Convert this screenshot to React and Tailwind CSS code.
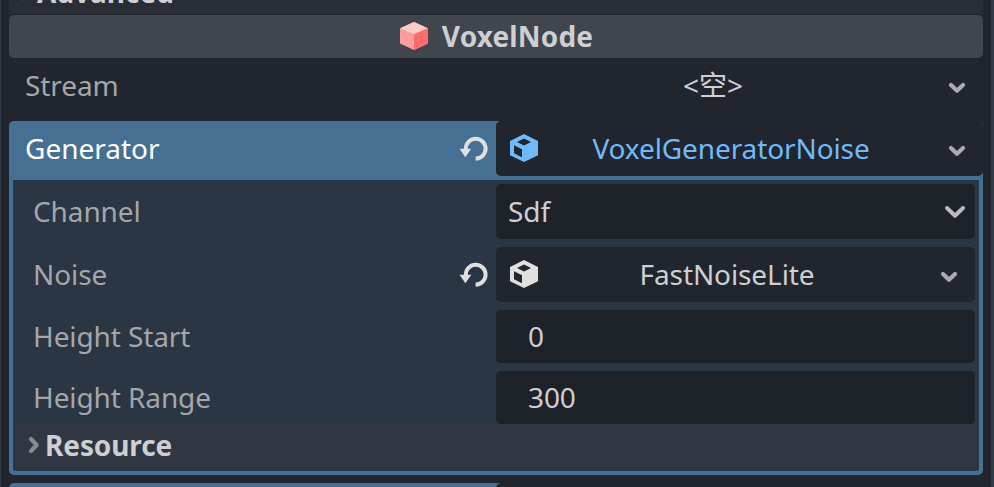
const label = "flex-1 whitespace-nowrap pb-0.5 text-[#a4a6a9]";

function Chevron({ className = "", width = 18, height = 12, stroke = "#a9abae", strokeWidth = 4.2 }) {
  return (
    <svg className={"shrink-0 " + className} width={width} height={height} viewBox={`0 0 ${width} ${height}`} fill="none">
      <path
        d={`M3 3L${width / 2} ${height - 3.3}L${width - 3} 3`}
        stroke={stroke}
        strokeWidth={strokeWidth}
        strokeLinecap="round"
        strokeLinejoin="round"
      />
    </svg>
  );
}

function ResourceCube({ color }) {
  return (
    <svg className="mb-px shrink-0" width="28" height="28" viewBox="0 0 28 28">
      <path
        fill={color}
        fillRule="evenodd"
        d="M14 0L28 7V21.3L14 28L0 21.3V7ZM14 4.6L7 8L14 11.4L21 8ZM4 11.2V19.2L12 23.2V15.2Z"
      />
    </svg>
  );
}

function Revert() {
  return (
    <svg className="mr-2 shrink-0" width="29" height="26" viewBox="0 0 29 26">
      <path d="M6.8 14V12.6A9.9 9.9 0 1 1 16.6 22.6" fill="none" stroke="#e0e0e0" strokeWidth="4" />
      <path d="M0.5 12.8H12.3L6.4 21.3Z" fill="#e0e0e0" />
    </svg>
  );
}

function VoxelIcon() {
  return (
    <svg width="30" height="30" viewBox="0 0 30 30">
      <path d="M15 1L29 7.4V22.4L15 29L1 22.4V7.4Z" fill="#fc9c9c" />
      <path d="M15 1L29 7.2L15 13.2L1 7.2Z" fill="#fdcaca" />
      <path d="M15 13.2L29 7.2V22.6L15 29Z" fill="#fc6c6c" />
    </svg>
  );
}

export default function App() {
  return (
    <div className="flex h-[487px] w-[994px] flex-col overflow-hidden border-r-[3px] border-l border-[#343b48] bg-[#21252e] pr-2 pl-2 font-['Noto_Sans','Noto_Sans_CJK_SC',sans-serif] text-[28px] leading-[38px] tracking-[-0.1px] text-[#cdcfd2]">
      <div className="flex h-[15px] shrink-0 items-end border-b border-[#20242c] bg-[#292d36] pb-[3px] pl-2">
        <Chevron className="-rotate-90 mb-[13px]" stroke="#868a91" />
        <span className="ml-0.5 font-bold tracking-normal">Advanced</span>
      </div>

      <div className="flex h-[43px] shrink-0 items-center justify-center gap-[13px] rounded-[5px] bg-[#41454d] pb-0.5">
        <VoxelIcon />
        <span className="font-bold tracking-[0.15px]">VoxelNode</span>
      </div>

      <div className="flex h-[63px] shrink-0 items-center pb-[7px]">
        <span className={label + " pl-4"}>Stream</span>
        <div className="flex w-[487px] items-center">
          <span className="flex-1 pr-[18px] pb-0.5 text-center tracking-normal">&lt;空&gt;</span>
          <Chevron className="mt-[3px] mr-[17px]" />
        </div>
      </div>

      <section className="flex h-[354px] shrink-0 flex-col rounded-[5px] bg-[#457094]">
        <div className="flex h-[55px] shrink-0 items-center">
          <span className="flex-1 pb-0.5 pl-4 tracking-normal text-white">Generator</span>
          <Revert />
          <div className="flex h-[55px] w-[487px] items-center rounded-[5px] bg-[#21252e] pl-[14px]">
            <ResourceCube color="#70bafa" />
            <span className="flex-1 pr-6 pb-0.5 text-center text-[#70bafa]">VoxelGeneratorNoise</span>
            <Chevron className="mt-1 mr-[17px]" />
          </div>
        </div>

        <div className="mx-1 mt-1 mb-1 flex flex-1 flex-col rounded-b-[2px] bg-[#2b3644] px-1 pt-1">
          <div className="mb-2 flex h-[55px] items-center">
            <span className={label + " pl-4"}>Channel</span>
            <div className="flex h-[55px] w-[479px] items-center justify-between rounded-[5px] bg-[#1d2229] pr-[9px] pl-3">
              <span className="pb-0.5">Sdf</span>
              <Chevron width={22} height={14} stroke="#b9bbbe" strokeWidth={4} />
            </div>
          </div>
          <div className="mb-2 flex h-[55px] items-center">
            <span className={label + " pl-4"}>Noise</span>
            <Revert />
            <div className="flex h-[55px] w-[479px] items-center rounded-[5px] bg-[#21252e] pl-[14px]">
              <ResourceCube color="#e0e0e0" />
              <span className="flex-1 pr-6 pb-0.5 text-center">FastNoiseLite</span>
              <Chevron className="mt-1 mr-[17px]" />
            </div>
          </div>
          <div className="mb-2 flex h-[53px] items-center">
            <span className={label + " pl-4"}>Height Start</span>
            <div className="flex h-[53px] w-[479px] items-center rounded-[5px] bg-[#1d2228] pb-0.5 pl-8">0</div>
          </div>
          <div className="flex h-[53px] items-center">
            <span className={label + " pl-4"}>Height Range</span>
            <div className="flex h-[53px] w-[479px] items-center rounded-[5px] bg-[#1d2228] pb-0.5 pl-8">300</div>
          </div>
          <div className="flex h-[43px] items-center bg-[#313742] pl-2">
            <Chevron className="mb-0.5 -rotate-90" stroke="#868a91" />
            <span className="ml-0.5 pb-0.5 font-bold">Resource</span>
          </div>
        </div>
      </section>

      <div className="mt-2 flex h-[60px] shrink-0 rounded-t-[5px] bg-[#457094]">
        <div className="ml-auto w-[487px] rounded-tl-[5px] bg-[#21252e]" />
      </div>
    </div>
  );
}
